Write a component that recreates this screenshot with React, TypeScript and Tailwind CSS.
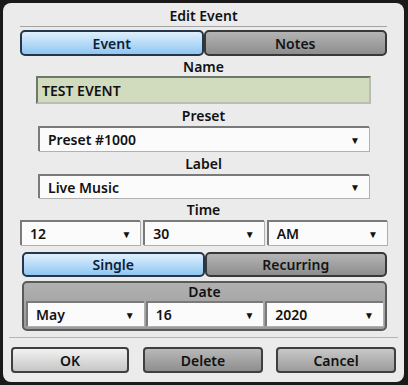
import React from 'react';

const font = { fontFamily: '"Noto Sans", "Open Sans", sans-serif' };

const Tab: React.FC<{ label: string; active?: boolean }> = ({ label, active }) => (
  <div
    className={`flex-1 h-full flex items-center justify-center rounded-[5px] border-2 text-[14px] font-semibold ${
      active
        ? 'bg-gradient-to-b from-[#dff0fd] to-[#8fc6f1] border-[#26364a] text-[#0e2038]'
        : 'bg-gradient-to-b from-[#b4b4b4] to-[#8d8d8d] border-[#383838] text-[#141414]'
    }`}
  >
    {label}
  </div>
);

const Select: React.FC<{ value: string; className?: string }> = ({ value, className = '' }) => (
  <div
    className={`relative h-full flex items-center bg-[#fbfbfb] border-t-2 border-l-2 border-[#7a7a7a] shadow-[1px_1px_0_#b0b0b0] pl-[8px] text-[14px] font-semibold text-[#111] ${className}`}
  >
    {value}
    <span className="absolute right-[9px] top-1/2 -translate-y-1/2 text-[10px] text-[#111]">▼</span>
  </div>
);

const Label: React.FC<{ text: string; h: string }> = ({ text, h }) => (
  <div className={`${h} flex items-end justify-center text-[14px] font-semibold text-[#111] leading-[18px]`}>
    {text}
  </div>
);

const Button: React.FC<{ label: string; tone: string; w: string }> = ({ label, tone, w }) => (
  <div
    className={`${w} h-[26px] flex items-center justify-center rounded-[4px] border-2 border-[#3f3f3f] text-[14px] font-semibold text-[#111] ${tone}`}
  >
    {label}
  </div>
);

export default function App() {
  return (
    <div className="w-[408px] h-[385px] bg-[#1a1a1a] pt-[3px] pl-[3px]" style={font}>
      <div className="w-[401px] h-[379px] bg-[#ebebeb] rounded-[8px] flex flex-col">
        {/* Title */}
        <div className="h-[22px] flex items-end justify-center text-[14px] font-semibold text-[#111] leading-[18px]">
          Edit Event
        </div>
        <div className="mx-[17px] mt-[1px] border-t border-[#a3a3a3]" />

        {/* Tabs */}
        <div className="mx-[17px] mt-[3px] h-[26px] flex">
          <Tab label="Event" active />
          <Tab label="Notes" />
        </div>

        <Label text="Name" h="h-[20px]" />
        <div className="mx-[33px] h-[28px] flex items-center bg-[#d1dbbd] border-2 border-[#6f7868] border-r-[#b9bdb3] border-b-[#b9bdb3] pl-[4px] text-[14px] font-semibold text-[#111]">
          TEST EVENT
        </div>

        <Label text="Preset" h="h-[21px]" />
        <div className="ml-[35px] mr-[35px] h-[25px] mt-[1px]">
          <Select value="Preset #1000" />
        </div>

        <Label text="Label" h="h-[22px]" />
        <div className="ml-[35px] mr-[35px] h-[24px] mt-[1px]">
          <Select value="Live Music" />
        </div>

        <Label text="Time" h="h-[21px]" />
        <div className="mx-[17px] h-[25px] mt-[1px] flex gap-[3px]">
          <Select value="12" className="flex-1" />
          <Select value="30" className="flex-1" />
          <Select value="AM" className="flex-1" />
        </div>

        {/* Single / Recurring */}
        <div className="ml-[19px] mr-[17px] mt-[7px] h-[25px] flex">
          <Tab label="Single" active />
          <Tab label="Recurring" />
        </div>

        {/* Date group */}
        <div className="ml-[19px] mr-[17px] mt-[4px] h-[50px] rounded-[5px] border-2 border-[#5a5a5a] bg-gradient-to-b from-[#b0b0b0] to-[#9a9a9a] flex flex-col">
          <div className="h-[18px] flex items-center justify-center text-[14px] font-semibold text-[#111] leading-[18px]">
            Date
          </div>
          <div className="h-[25px] mx-[2px] flex gap-[2px]">
            <Select value="May" className="flex-1" />
            <Select value="16" className="flex-1" />
            <Select value="2020" className="flex-1" />
          </div>
        </div>

        <div className="mx-[6px] mt-[6px] border-t border-[#b5b5b5]" />

        {/* Buttons */}
        <div className="mt-[9px] ml-[8px] flex">
          <Button label="OK" w="w-[118px]" tone="bg-gradient-to-b from-[#f2f2f2] to-[#c6c6c6]" />
          <div className="w-[14px]" />
          <Button label="Delete" w="w-[120px]" tone="bg-gradient-to-b from-[#b9b9b9] to-[#8e8e8e]" />
          <div className="w-[13px]" />
          <Button label="Cancel" w="w-[120px]" tone="bg-gradient-to-b from-[#c8c8c8] to-[#9c9c9c]" />
        </div>
      </div>
    </div>
  );
}
